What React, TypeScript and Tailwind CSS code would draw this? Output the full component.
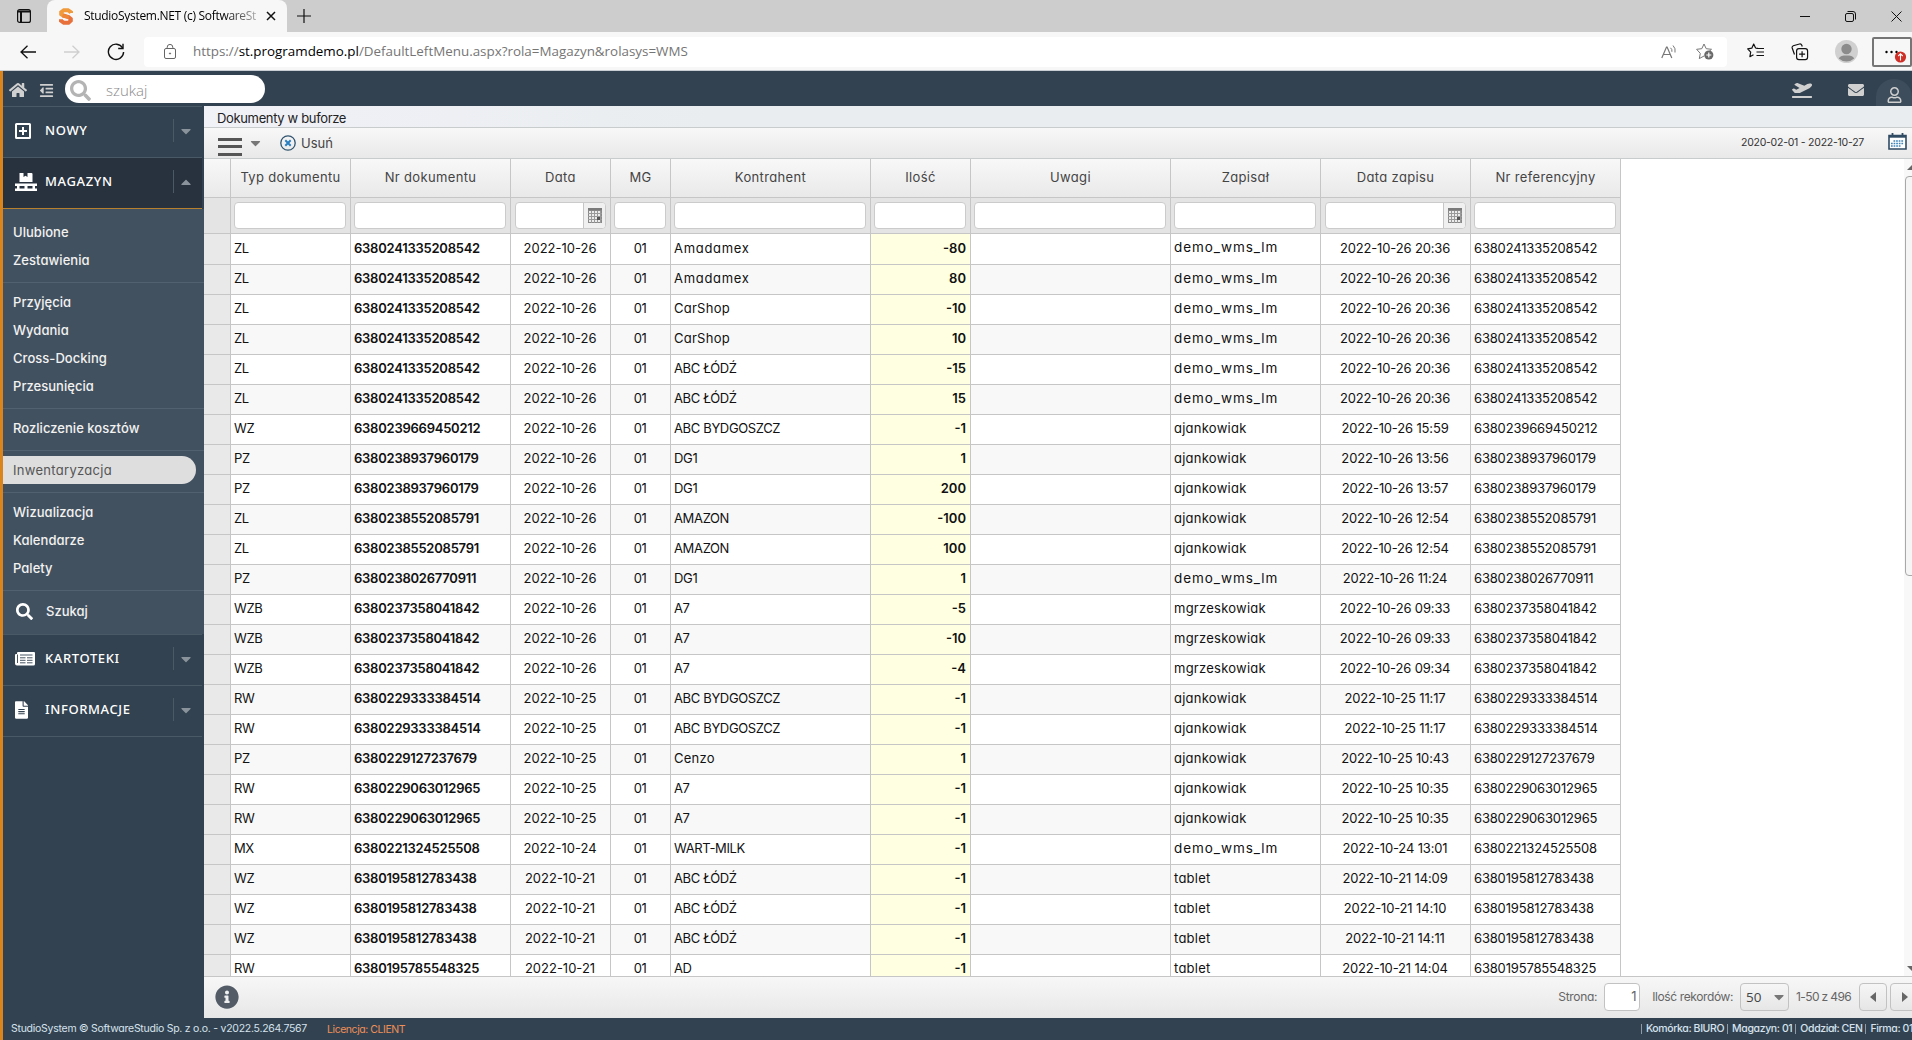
import React from "react";
import {
  FaHome,
  FaOutdent,
  FaSearch,
  FaEnvelope,
  FaRegUser,
  FaPlaneDeparture,
  FaFileAlt,
  FaInfoCircle,
  FaCaretDown,
  FaCaretUp,
} from "react-icons/fa";

type Row = [string, string, string, string, number, string, string];

const rows: Row[] = [
  ["ZL", "6380241335208542", "2022-10-26", "Amadamex", -80, "demo_wms_lm", "2022-10-26 20:36"],
  ["ZL", "6380241335208542", "2022-10-26", "Amadamex", 80, "demo_wms_lm", "2022-10-26 20:36"],
  ["ZL", "6380241335208542", "2022-10-26", "CarShop", -10, "demo_wms_lm", "2022-10-26 20:36"],
  ["ZL", "6380241335208542", "2022-10-26", "CarShop", 10, "demo_wms_lm", "2022-10-26 20:36"],
  ["ZL", "6380241335208542", "2022-10-26", "ABC ŁÓDŹ", -15, "demo_wms_lm", "2022-10-26 20:36"],
  ["ZL", "6380241335208542", "2022-10-26", "ABC ŁÓDŹ", 15, "demo_wms_lm", "2022-10-26 20:36"],
  ["WZ", "6380239669450212", "2022-10-26", "ABC BYDGOSZCZ", -1, "ajankowiak", "2022-10-26 15:59"],
  ["PZ", "6380238937960179", "2022-10-26", "DG1", 1, "ajankowiak", "2022-10-26 13:56"],
  ["PZ", "6380238937960179", "2022-10-26", "DG1", 200, "ajankowiak", "2022-10-26 13:57"],
  ["ZL", "6380238552085791", "2022-10-26", "AMAZON", -100, "ajankowiak", "2022-10-26 12:54"],
  ["ZL", "6380238552085791", "2022-10-26", "AMAZON", 100, "ajankowiak", "2022-10-26 12:54"],
  ["PZ", "6380238026770911", "2022-10-26", "DG1", 1, "demo_wms_lm", "2022-10-26 11:24"],
  ["WZB", "6380237358041842", "2022-10-26", "A7", -5, "mgrzeskowiak", "2022-10-26 09:33"],
  ["WZB", "6380237358041842", "2022-10-26", "A7", -10, "mgrzeskowiak", "2022-10-26 09:33"],
  ["WZB", "6380237358041842", "2022-10-26", "A7", -4, "mgrzeskowiak", "2022-10-26 09:34"],
  ["RW", "6380229333384514", "2022-10-25", "ABC BYDGOSZCZ", -1, "ajankowiak", "2022-10-25 11:17"],
  ["RW", "6380229333384514", "2022-10-25", "ABC BYDGOSZCZ", -1, "ajankowiak", "2022-10-25 11:17"],
  ["PZ", "6380229127237679", "2022-10-25", "Cenzo", 1, "ajankowiak", "2022-10-25 10:43"],
  ["RW", "6380229063012965", "2022-10-25", "A7", -1, "ajankowiak", "2022-10-25 10:35"],
  ["RW", "6380229063012965", "2022-10-25", "A7", -1, "ajankowiak", "2022-10-25 10:35"],
  ["MX", "6380221324525508", "2022-10-24", "WART-MILK", -1, "demo_wms_lm", "2022-10-24 13:01"],
  ["WZ", "6380195812783438", "2022-10-21", "ABC ŁÓDŹ", -1, "tablet", "2022-10-21 14:09"],
  ["WZ", "6380195812783438", "2022-10-21", "ABC ŁÓDŹ", -1, "tablet", "2022-10-21 14:10"],
  ["WZ", "6380195812783438", "2022-10-21", "ABC ŁÓDŹ", -1, "tablet", "2022-10-21 14:11"],
  ["RW", "6380195785548325", "2022-10-21", "AD", -1, "tablet", "2022-10-21 14:04"],
];

const COLS =
  "grid grid-cols-[27px_120px_160px_100px_60px_200px_100px_200px_150px_150px_150px] w-[1417px]";

const headers: { label: string; date?: boolean }[] = [
  { label: "Typ dokumentu" },
  { label: "Nr dokumentu" },
  { label: "Data", date: true },
  { label: "MG" },
  { label: "Kontrahent" },
  { label: "Ilość" },
  { label: "Uwagi" },
  { label: "Zapisał" },
  { label: "Data zapisu", date: true },
  { label: "Nr referencyjny" },
];

const cell = "border-r border-[#c6c6c6] flex items-center overflow-hidden whitespace-nowrap";
const dataCell = cell + " pb-[2px]";

function nameTracking(text: string) {
  if (text === text.toUpperCase()) return "tracking-[-0.35px]";
  if (text.includes("_")) return "text-[13.5px] tracking-[0.95px]";
  if (text === "Amadamex") return "tracking-[0.7px]";
  return "tracking-[0.25px]";
}

function DateGridIcon() {
  return (
    <svg width="14" height="15" viewBox="0 0 14 15" shapeRendering="crispEdges">
      <rect width="14" height="3" fill="#7b7b7b" />
      <rect x="0.5" y="2.5" width="13" height="12" fill="#ececec" stroke="#888" />
      <path d="M3.5 3v12M6.5 3v12M9.5 3v12M12.5 3v12M0 5.5h14M0 8.5h14M0 11.5h14" stroke="#9a9a9a" fill="none" />
      <rect x="9" y="9" width="3" height="3" fill="#555" />
    </svg>
  );
}

function PalletIcon() {
  return (
    <svg width="22" height="18" viewBox="0 0 22 18" fill="#fff">
      <path d="M4 0h4v4l2-1.300 2 1.300V0h4a1 1 0 0 1 1 1v8H4z" transform="translate(0.500 0)" />
      <path d="M0 10.500h22v2.500h-2v2.500h2V18H0v-2.500h2V13H0zM4.500 13v2.500h5V13zM12.500 13v2.500h5V13z" fillRule="evenodd" />
    </svg>
  );
}

function BrowserChrome() {
  return (
    <div className="h-[71px] shrink-0 bg-[#f7f7f7] font-['Open_Sans',sans-serif]">
      <div className="flex h-8 bg-[#cdcdcd] text-black">
        <div className="flex w-[47px] items-center pl-[17px]">
          <svg width="14" height="14" viewBox="0 0 14 14" fill="none" stroke="#111" strokeWidth="1.2">
            <rect x="0.6" y="0.6" width="12.800" height="12.800" rx="2" />
            <path d="M1 2.400h12M4 3.500v10" strokeWidth="2" />
          </svg>
        </div>
        <div className="flex w-[240px] items-center rounded-t-lg bg-[#f7f7f7] pl-3">
          <svg width="14" height="17" viewBox="0 0 14 17" fill="none" strokeWidth="4">
            <path d="M12 5V4.300L9 2.200H4.800L2.200 4.200v2L5 8.200" stroke="#f19a3c" />
            <path d="M4 7.500l5.500 1.600 2.300 1.800v1.800l-2.300 2H4.800L2 12.800v-1.500" stroke="#e8703a" />
            <path d="M3.500 7.300l6.500 2" stroke="#ee8638" strokeWidth="3.500" />
          </svg>
          <div className="ml-[11px] w-[174px] whitespace-nowrap text-[12px] tracking-[-0.3px] [mask-image:linear-gradient(to_right,#000_80%,#0004)]">
            StudioSystem.NET (c) SoftwareSt
          </div>
          <svg className="ml-[8px]" width="10" height="10" viewBox="0 0 10 10" stroke="#111" strokeWidth="1.5">
            <path d="M1 1l8 8M9 1l-8 8" />
          </svg>
        </div>
        <div className="flex items-center pl-[10px]">
          <svg width="14" height="14" viewBox="0 0 14 14" stroke="#111" strokeWidth="1.2">
            <path d="M0 7h14M7 0v14" />
          </svg>
        </div>
        <div className="ml-auto flex items-center gap-[35px] pr-[10px]">
          <svg width="10" height="10" viewBox="0 0 10 10" stroke="#111">
            <path d="M0 5.500h10" />
          </svg>
          <svg width="11" height="11" viewBox="0 0 11 11" fill="none" stroke="#111">
            <rect x="0.500" y="2.500" width="8" height="8" rx="1.500" />
            <path d="M2.500.5H8a2.500 2.500 0 0 1 2.500 2.500v5.500" />
          </svg>
          <svg width="11" height="11" viewBox="0 0 11 11" stroke="#111">
            <path d="M.5.5l10 10M10.500.5l-10 10" />
          </svg>
        </div>
      </div>
      <div className="flex h-[38px] items-center pt-[1px]">
        <div className="flex w-[144px] shrink-0 items-center pl-[20px]">
          <svg width="16" height="14" viewBox="0 0 16 14" fill="none" stroke="#111" strokeWidth="1.3">
            <path d="M16 7H1M7.500.7L1 7l6.500 6.300" />
          </svg>
          <svg className="ml-[28px]" width="16" height="14" viewBox="0 0 16 14" fill="none" stroke="#cfcfcf" strokeWidth="1.300">
            <path d="M0 7h15M8.500.7L15 7l-6.500 6.300" />
          </svg>
          <svg className="ml-[27px]" width="18" height="18" viewBox="0 0 18 18" fill="none" stroke="#111" strokeWidth="1.400">
            <path d="M15.600 5A7.600 7.600 0 1 0 16.600 9" />
            <path d="M16 .8v4.700h-4.800" />
          </svg>
        </div>
        <div className="flex h-[30px] w-[1584px] items-center rounded bg-white pl-[20px] pr-[13px] text-[#757575]">
          <svg width="12" height="15" viewBox="0 0 12 15" fill="none" stroke="#666">
            <rect x="0.500" y="4.500" width="11" height="10" rx="1.500" />
            <path d="M3.200 4.500V3.200a2.800 2.800 0 0 1 5.600 0v1.300" />
            <circle cx="6" cy="9.500" r="0.600" fill="#666" />
          </svg>
          <div className="ml-[17px] text-[13.4px] leading-none">
            https://<span className="text-black">st.programdemo.pl</span>/DefaultLeftMenu.aspx?rola=Magazyn&amp;rolasys=WMS
          </div>
          <svg className="ml-auto" width="17" height="16" viewBox="0 0 17 16" fill="none" stroke="#777">
            <path d="M.8 14L5.500 3h.6l4.700 11M2.400 10.500h6.800" strokeWidth="1.200" />
            <path d="M9.500 3.800a4 4 0 0 1 1.400 4M12 1.500a7.500 7.500 0 0 1 2 7" />
          </svg>
          <svg className="ml-[18px]" width="18" height="17" viewBox="0 0 18 17">
            <path d="M8 1l2.200 4.700 5.300.6-3.900 3.600M8 13l-4.700 2.600 1-5.200L.6 6.300l5.200-.6L8 1" fill="none" stroke="#777" />
            <circle cx="12.800" cy="12" r="4.600" fill="#6a6a6a" />
            <path d="M12.800 9.500v5M10.300 12h5" stroke="#fff" strokeWidth="1.200" />
          </svg>
        </div>
        <svg className="ml-[20px]" width="17" height="17" viewBox="0 0 17 17" fill="none" stroke="#111" strokeWidth="1.200">
          <path d="M11 5.300l-2.400-.3L6.700 1 4.800 5.200.7 5.900l3 3.200-.8 4.600 3.600-2" strokeLinejoin="round" />
          <path d="M9.500 5.500H17M9.500 9H17M9.500 12.500H17" />
        </svg>
        <svg className="ml-[27px]" width="18" height="18" viewBox="0 0 18 18" fill="none" stroke="#111" strokeWidth="1.200">
          <rect x="5.600" y="5.600" width="11" height="11" rx="2.300" />
          <path d="M11.100 8.200v6M8.100 11.200h6M3.500 11.500L1.200 5a2 2 0 0 1 1.100-2.300L8.500 1a2 2 0 0 1 2.300 1.200l.5 1.300" />
        </svg>
        <svg className="ml-[26px]" width="23" height="23" viewBox="0 0 23 23">
          <circle cx="11.500" cy="11.500" r="11.500" fill="#d0d0d0" />
          <circle cx="11.500" cy="9" r="5.200" fill="#8b8b8b" />
          <path d="M3.800 18.500c1-2.500 4-3 7.700-3s6.700.5 7.700 3a11.500 11.500 0 0 1-15.400 0" fill="#8b8b8b" />
        </svg>
        <div className="ml-[14px] flex h-[30px] w-[40px] shrink-0 items-center rounded-[2px] border-2 border-[#757575]">
          <svg width="36" height="26" viewBox="0 0 36 26">
            <circle cx="12.500" cy="13" r="1.200" />
            <circle cx="17.500" cy="13" r="1.200" />
            <circle cx="22.500" cy="13" r="1.200" />
            <circle cx="26.500" cy="18" r="5.600" fill="#cf2f27" />
            <path d="M26.500 21.500v-6.500M24.300 17l2.200-2.300 2.200 2.300" stroke="#fff" strokeWidth="1.100" fill="none" />
          </svg>
        </div>
      </div>
      <div className="h-px bg-[#c9ced4]" />
    </div>
  );
}

function AppHeader() {
  return (
    <div className="flex h-[35px] shrink-0 items-center bg-[#334250] text-[#d0d0d0]">
      <FaHome className="mt-[3px] ml-[6px] h-[18px] w-[18px]" />
      <FaOutdent className="mt-[3px] ml-[12px] h-[15px] w-[15px]" />
      <div className="ml-[11px] flex h-7 w-[200px] items-center rounded-full bg-white pl-[5px]">
        <FaSearch className="mt-1 h-[21px] w-[21px] text-[#b4b4b4]" />
        <span className="ml-[15px] mt-[3px] font-['Open_Sans',sans-serif] text-[15px] font-light text-[#8a8a8a]">szukaj</span>
      </div>
      <div className="ml-auto flex h-full items-center">
        <FaPlaneDeparture className="mt-[3px] h-4 w-[20px]" />
        <FaEnvelope className="mt-[3px] ml-[36px] h-4 w-4" />
        <div className="ml-[12px] mt-2 flex h-[27px] w-[36px] items-center justify-center rounded-t-full bg-[#3d4d5b] pl-px">
          <FaRegUser className="mt-[5px] h-4 w-[15px]" />
        </div>
      </div>
    </div>
  );
}

function MenuHead({
  icon,
  label,
  open,
  className,
}: {
  icon: React.ReactNode;
  label: string;
  open?: boolean;
  className: string;
}) {
  return (
    <div className={"mr-[2px] flex items-center border-b pb-[3px] " + className}>
      <div className="flex w-[42px] items-center pl-3">{icon}</div>
      <span className="font-['Noto_Sans',sans-serif] text-[13px] font-medium tracking-[0.62px] text-white">{label}</span>
      <div className="ml-auto flex h-[23px] w-[29px] items-center border-l border-[#4b5a67] pl-[7px] text-[#8a939b]">
        {open ? <FaCaretUp className="h-4 w-[10px]" /> : <FaCaretDown className="h-4 w-[10px]" />}
      </div>
    </div>
  );
}

const groups = [
  ["Przyjęcia", "Wydania", "Cross-Docking", "Przesunięcia"],
  ["Rozliczenie kosztów"],
  ["Inwentaryzacja"],
  ["Wizualizacja", "Kalendarze", "Palety"],
];

function MenuLink({ label }: { label: string }) {
  return label === "Inwentaryzacja" ? (
    <div className="mr-2 flex h-7 items-center rounded-r-full bg-[#dedede] pl-[10px] text-[13px] tracking-[0.3px] text-[#555]">
      {label}
    </div>
  ) : (
    <div className="flex h-7 items-center pl-[10px] text-[13px] font-medium tracking-[0.04px] text-[#f2f2f2]">{label}</div>
  );
}

function Sidebar() {
  return (
    <div className="flex w-[201px] shrink-0 flex-col bg-[#334250]">
      <MenuHead
        className="h-[52px] border-t border-[#4a5966]"
        label="NOWY"
        icon={
          <svg width="16" height="16" viewBox="0 0 16 16" fill="none" stroke="#fff" strokeWidth="2">
            <rect x="1" y="1" width="14" height="14" rx="0.500" />
            <path d="M8 4v8M4 8h8" />
          </svg>
        }
      />
      <MenuHead className="h-[51px] border-[#b7802f] bg-[#28323e]" label="MAGAZYN" icon={<PalletIcon />} open />
      <div className="bg-[#42515f]">
        <div className="pt-[9px] pb-2">
          <MenuLink label="Ulubione" />
          <MenuLink label="Zestawienia" />
        </div>
        {groups.map((g) => (
          <div key={g[0]} className="border-t border-[#51616f] pt-[5px] pb-2">
            {g.map((l) => (
              <MenuLink key={l} label={l} />
            ))}
          </div>
        ))}
        <div className="flex h-[44px] items-center border-t border-[#51616f] pb-[3px]">
          <FaSearch className="ml-[13px] h-[17px] w-[17px] text-white" />
          <span className="ml-[13px] text-[13px] font-medium text-[#f2f2f2]">Szukaj</span>
        </div>
      </div>
      <MenuHead
        className="h-[52px] border-t border-[#4a5966]"
        label="KARTOTEKI"
        icon={
          <svg width="20" height="14" viewBox="0 0 20 14">
            <path d="M3 0h16a1 1 0 0 1 1 1v11a1.500 1.500 0 0 1-1.500 1.500H2A2 2 0 0 1 0 11.500V3a1 1 0 0 1 1-1h1V1a1 1 0 0 1 1-1z" fill="#fff" />
            <path d="M2.500 2.500V11M5 3h12.500M5 5.800h5.500M12 5.800h5.500M5 8.300h5.500M12 8.300h5.500M5 10.800h5.500M12 10.800h5.500" stroke="#334250" strokeWidth="0.900" />
          </svg>
        }
      />
      <MenuHead
        className="h-[51px] border-[#4a5966]"
        label="INFORMACJE"
        icon={<FaFileAlt className="h-[18px] w-[13px] text-white" />}
      />
    </div>
  );
}

function Toolbar() {
  return (
    <>
      <div className="flex h-[21px] shrink-0 items-center bg-linear-to-r from-[#f1f1f8] to-[#e9edef] to-30% pl-[13px] pt-[3px] text-[13px] tracking-[-0.35px] text-[#222]">
        Dokumenty w buforze
      </div>
      <div className="flex h-[32px] shrink-0 items-center border-y border-[#c9cccd] bg-linear-to-b from-[#f8f8f8] to-[#e9e9e9] text-[#444]">
        <div className="ml-[14px] mt-[7px] flex h-[18px] w-6 flex-col justify-between">
          <div className="h-[3px] bg-[#555]" />
          <div className="h-[3px] bg-[#555]" />
          <div className="h-[3px] bg-[#555]" />
        </div>
        <FaCaretDown className="ml-[8px] h-4 w-[11px] text-[#777]" />
        <svg className="ml-[19px]" width="16" height="16" viewBox="0 0 16 16" fill="none">
          <circle cx="8" cy="8" r="7.200" stroke="#31546f" strokeWidth="1.300" />
          <path d="M5.300 5.300l5.400 5.400M10.700 5.300l-5.400 5.400" stroke="#2b7fc0" strokeWidth="2" />
        </svg>
        <span className="ml-[5px] text-[13px]">Usuń</span>
        <span className="ml-auto text-[10.5px] tracking-[-0.25px] text-[#333]">2020-02-01 - 2022-10-27</span>
        <svg className="mb-[3px] ml-[24px] mr-[5px]" width="19" height="17" viewBox="0 0 19 17">
          <path d="M1 2.500h17v13.500H1z" fill="#fff" stroke="#2f4a63" strokeWidth="1.600" />
          <path d="M1 3.700h17" stroke="#2f4a63" strokeWidth="2" />
          <path d="M4.500 0v4M14.500 0v4" stroke="#2f4a63" strokeWidth="1.800" />
          <path d="M5.500 8h10.500M3 10.500h13M3 13h10" stroke="#3b83b8" strokeWidth="1.600" strokeDasharray="1.700 0.900" />
        </svg>
      </div>
    </>
  );
}

function Grid() {
  return (
    <div className="flex min-h-0 flex-1 bg-white">
      <div className="flex min-h-0 flex-1 flex-col overflow-hidden">
        <div className={COLS + " h-[39px] shrink-0 border-b border-[#c6c6c6] bg-linear-to-b from-[#f8f8f8] to-[#e9e9e9]"}>
          <div className={cell} />
          {headers.map((h) => (
            <div key={h.label} className={cell + " justify-center pb-[2px] text-[13px] tracking-[0.35px] text-[#444]"}>
              {h.label}
            </div>
          ))}
        </div>
        <div className={COLS + " h-9 shrink-0 border-b border-[#c6c6c6] bg-[#e4e4e4]"}>
          <div className={cell} />
          {headers.map((h) => (
            <div key={h.label} className={cell + " pr-1 " + (h.date ? "pl-[4px]" : "pl-[3px]")}>
              <div className="flex h-[27px] flex-1 justify-end overflow-hidden rounded-[4px] border border-[#cbcbcb] bg-white">
                {h.date && (
                  <div className="flex w-[22px] items-center justify-center border-l border-[#c6c6c6] bg-[#f0f0f0]">
                    <DateGridIcon />
                  </div>
                )}
              </div>
            </div>
          ))}
        </div>
        <div className="min-h-0 flex-1 overflow-hidden text-[13px] text-[#111]">
          {rows.map((r, i) => (
            <div
              key={i}
              className={
                COLS +
                " border-b border-[#c6c6c6] " +
                (i === 0 ? "h-[31px] " : "h-[30px] ") +
                (i % 2 ? "bg-[#f8f8f8]" : "bg-white")
              }
            >
              <div className={dataCell + " bg-[#e9e9e9]"} />
              <div className={dataCell + " pl-[3px] tracking-[-0.4px]"}>{r[0]}</div>
              <div className={dataCell + " pl-[3px] font-semibold tracking-[-0.24px]"}>{r[1]}</div>
              <div className={dataCell + " justify-center pr-px"}>{r[2]}</div>
              <div className={dataCell + " justify-center pr-px tracking-[-0.5px]"}>01</div>
              <div className={dataCell + " pl-[3px] " + nameTracking(r[3])}>{r[3]}</div>
              <div className={dataCell + " justify-end bg-[#ffffe1] pr-1 font-semibold"}>{r[4]}</div>
              <div className={dataCell} />
              <div className={dataCell + " pl-[3px] " + nameTracking(r[5])}>{r[5]}</div>
              <div className={dataCell + " justify-center pr-px tracking-[-0.15px]"}>{r[6]}</div>
              <div className={dataCell + " pl-[3px] tracking-[-0.17px]"}>{r[1]}</div>
            </div>
          ))}
        </div>
      </div>
      <div className="flex w-2 shrink-0 flex-col overflow-hidden bg-[#f8f8f8]">
        <svg className="mt-[6px] ml-[3px] shrink-0" width="10" height="5" viewBox="0 0 10 5" fill="#666">
          <path d="M0 5L5 0l5 5z" />
        </svg>
        <div className="ml-px mt-[6px] h-[400px] w-4 rounded-[4px] border border-[#a8a8a8] bg-[#f5f5f5]" />
        <svg className="mb-[5px] ml-[3px] mt-auto shrink-0" width="10" height="5" viewBox="0 0 10 5" fill="#666">
          <path d="M0 0h10L5 5z" />
        </svg>
      </div>
    </div>
  );
}

function Pager() {
  const btn =
    "flex h-7 shrink-0 items-center rounded-[4px] border border-[#c2c2c2] bg-linear-to-b from-[#f6f6f6] to-[#e6e6e6]";
  return (
    <div className="flex h-[42px] shrink-0 items-center overflow-hidden whitespace-nowrap border-t border-[#c6c6c6] bg-linear-to-b from-[#f7f7f7] to-[#e7e7e7] pb-[2px] text-[12px] tracking-[-0.38px] text-[#666]">
      <FaInfoCircle className="ml-[11px] h-6 w-6 shrink-0 text-[#525b66]" />
      <span className="ml-auto tracking-[-0.3px]">Strona:</span>
      <div className="ml-[7px] flex h-7 w-9 items-center justify-end rounded-[4px] border border-[#c2c2c2] bg-white pr-[3px] text-[13px]">
        1
      </div>
      <span className="ml-[12px]">Ilość rekordów:</span>
      <div className={btn + " ml-[7px] w-[49px] justify-between pl-[5px] pr-1 text-[#444]"}>
        <span className="pt-[3px] font-['Open_Sans',sans-serif] text-[13.5px] tracking-normal">50</span>
        <FaCaretDown className="h-4 w-[10px] text-[#777]" />
      </div>
      <span className="ml-[7px] tracking-[-0.64px]">1-50 z 496</span>
      <div className={btn + " ml-[8px] w-7 justify-center"}>
        <svg width="6" height="10" viewBox="0 0 6 10" fill="#666">
          <path d="M6 0v10L0 5z" />
        </svg>
      </div>
      <div className={btn + " -mr-[6px] ml-[3px] w-7 pl-[11px]"}>
        <svg width="6" height="10" viewBox="0 0 6 10" fill="#666">
          <path d="M0 0v10l6-5z" />
        </svg>
      </div>
    </div>
  );
}

const footerItems = ["Komórka: BIURO", "Magazyn: 01", "Oddział: CEN", "Firma: 01"];

function Footer() {
  return (
    <div className="flex h-[22px] shrink-0 items-center whitespace-nowrap bg-[#334250] text-[10.5px] text-[#d5e2ee]">
      <span className="ml-[8px] tracking-[-0.26px]">StudioSystem © SoftwareStudio Sp. z o.o. - v2022.5.264.7567</span>
      <span className="ml-[20px] mt-[2px] tracking-[-0.45px] text-[#ee9058]">Licencja: CLIENT</span>
      <div className="ml-auto flex items-center font-medium">
        {footerItems.map((t, i) => (
          <React.Fragment key={t}>
            <span className="mr-[4px] h-[10px] w-px bg-[#8f9ba6]" />
            <span className={"tracking-[-0.38px] " + (i < 3 ? "mr-[3px]" : "-mr-px")}>{t}</span>
          </React.Fragment>
        ))}
      </div>
    </div>
  );
}

export default function App() {
  return (
    <div className="flex h-[1040px] w-[1912px] flex-col overflow-hidden bg-white font-[Inter,'Noto_Sans',sans-serif] leading-none [font-feature-settings:'cv11']">
      <BrowserChrome />
      <div className="flex min-h-0 flex-1">
        <div className="w-[3px] shrink-0 bg-[#d9851b]" />
        <div className="flex min-w-0 flex-1 flex-col">
          <AppHeader />
          <div className="flex min-h-0 flex-1">
            <Sidebar />
            <div className="flex min-w-0 flex-1 flex-col">
              <Toolbar />
              <Grid />
              <Pager />
            </div>
          </div>
          <Footer />
        </div>
      </div>
    </div>
  );
}
